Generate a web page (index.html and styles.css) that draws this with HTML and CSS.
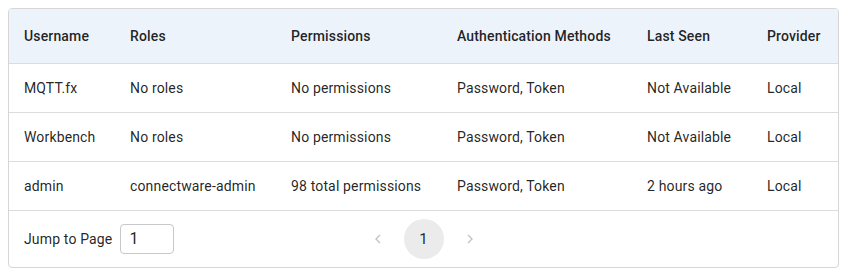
FILE: index.html
```html
<!DOCTYPE html>
<html>
<head>
<meta charset="utf-8">
<link rel="stylesheet" href="styles.css">
</head>
<body>
<div class="card">
  <table class="users">
    <colgroup>
      <col class="c1"><col class="c2"><col class="c3"><col class="c4"><col class="c5"><col class="c6">
    </colgroup>
    <thead>
      <tr><th>Username</th><th>Roles</th><th>Permissions</th><th>Authentication Methods</th><th>Last Seen</th><th>Provider</th></tr>
    </thead>
    <tbody>
      <tr><td>MQTT.fx</td><td>No roles</td><td>No permissions</td><td>Password, Token</td><td>Not Available</td><td>Local</td></tr>
      <tr><td>Workbench</td><td>No roles</td><td>No permissions</td><td>Password, Token</td><td>Not Available</td><td>Local</td></tr>
      <tr><td>admin</td><td>connectware-admin</td><td>98 total permissions</td><td>Password, Token</td><td>2 hours ago</td><td>Local</td></tr>
    </tbody>
  </table>
  <div class="footer">
    <div class="jump">
      <span>Jump to Page</span>
      <input class="page-input" type="text" value="1">
    </div>
    <div class="pager">
      <span class="chev"><svg width="16" height="16" viewBox="0 0 16 16"><path d="M10 4 L6 8 L10 12" fill="none" stroke="#c4c4c4" stroke-width="1.4"/></svg></span>
      <span class="page">1</span>
      <span class="chev"><svg width="16" height="16" viewBox="0 0 16 16"><path d="M6 4 L10 8 L6 12" fill="none" stroke="#c4c4c4" stroke-width="1.4"/></svg></span>
    </div>
    <div></div>
  </div>
</div>
</body>
</html>
```
FILE: styles.css
```css
* { box-sizing: border-box; }
body {
  margin: 8px;
  font-family: Roboto, "Liberation Sans", sans-serif;
  font-size: 14px;
  letter-spacing: 0.15px;
  color: rgba(0,0,0,0.87);
  background: #fff;
}
.card {
  width: 831px;
  border: 1px solid #d6d6d6;
  border-radius: 4px;
  overflow: hidden;
}
.users {
  width: 100%;
  border-collapse: collapse;
  table-layout: fixed;
}
.c1 { width: 106px; }
.c2 { width: 161px; }
.c3 { width: 166px; }
.c4 { width: 190px; }
.c5 { width: 120px; }
.c6 { width: auto; }
.users th {
  background: #edf3fb;
  font-weight: 500;
  text-align: left;
  height: 54px;
  padding: 0 0 0 15px;
  color: rgba(0,0,0,0.87);
  border-bottom: 1px solid #dcdcdc;
}
.users td {
  height: 49px;
  padding: 0 0 0 15px;
  border-bottom: 1px solid #dcdcdc;
  white-space: nowrap;
}
.footer {
  display: grid;
  grid-template-columns: 1fr auto 1fr;
  align-items: center;
  height: 56px;
  padding: 0 15px;
}
.jump {
  display: flex;
  align-items: center;
  gap: 8px;
}
.page-input {
  width: 54px;
  height: 30px;
  border: 1px solid #c8c8c8;
  border-radius: 4px;
  font: inherit;
  font-size: 16px;
  color: rgba(0,0,0,0.87);
  padding: 0 8px;
  outline: none;
}
.pager {
  display: flex;
  align-items: center;
  gap: 12px;
}
.chev {
  display: flex;
  width: 28px;
  justify-content: center;
}
.page {
  width: 40px;
  height: 40px;
  border-radius: 50%;
  background: #ebebeb;
  display: flex;
  align-items: center;
  justify-content: center;
  font-size: 15px;
}
```
